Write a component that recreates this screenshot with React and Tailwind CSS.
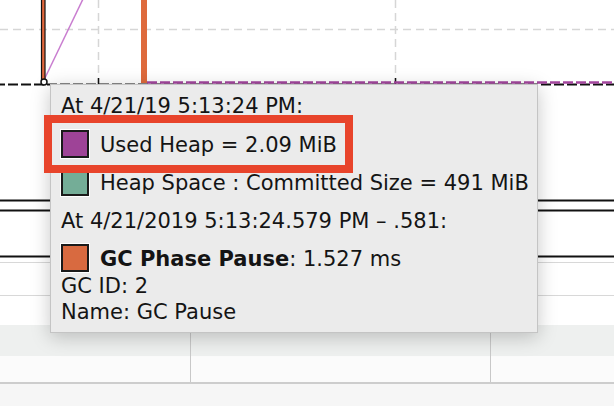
import React from 'react'

const font = { fontFamily: '"DejaVu Sans", "Liberation Sans", sans-serif' }

function Chart() {
  return (
    <svg width="614" height="325" className="block">
      {/* grid */}
      <line x1="0" y1="29.5" x2="614" y2="29.5" stroke="#d6d6d6" strokeWidth="1.5" strokeDasharray="8 5" />
      <line x1="98.5" y1="0" x2="98.5" y2="83" stroke="#d6d6d6" strokeWidth="1.5" strokeDasharray="8 5" />
      <line x1="395.5" y1="0" x2="395.5" y2="83" stroke="#d6d6d6" strokeWidth="1.5" strokeDasharray="8 5" />
      <line x1="98.5" y1="78" x2="98.5" y2="84" stroke="#111" strokeWidth="1.5" />
      <line x1="395.5" y1="78" x2="395.5" y2="84" stroke="#111" strokeWidth="1.5" />

      {/* series */}
      <line x1="0" y1="84.5" x2="614" y2="84.5" stroke="#111" strokeWidth="2" strokeDasharray="10 3" strokeDashoffset="5" />
      <line x1="147" y1="82.5" x2="614" y2="82.5" stroke="#a4479f" strokeWidth="2.5" strokeDasharray="10 3" />
      <line x1="44" y1="80" x2="83" y2="-1" stroke="#c97dd0" strokeWidth="1.5" />
      <rect x="41.5" y="-2" width="3.5" height="82" fill="#e0673c" stroke="#111" strokeWidth="1.2" />
      <circle cx="44" cy="82" r="3" fill="#fff" stroke="#111" strokeWidth="1.5" />
      <rect x="141" y="-1" width="6" height="84" fill="#de6a3c" />

      {/* lower lanes */}
      <line x1="0" y1="200.5" x2="614" y2="200.5" stroke="#111" strokeWidth="2" />
      <line x1="0" y1="210.5" x2="614" y2="210.5" stroke="#111" strokeWidth="2" />
      <line x1="0" y1="256.5" x2="614" y2="256.5" stroke="#111" strokeWidth="2" />
      <line x1="0" y1="262.5" x2="614" y2="262.5" stroke="#d8d8d8" strokeWidth="1" />
      <line x1="0" y1="295.5" x2="614" y2="295.5" stroke="#d8d8d8" strokeWidth="1" />
    </svg>
  )
}

function Swatch({ color }) {
  return <div className="w-[28px] h-[28px] shrink-0 border-2 border-[#1a1a1a] ring-1 ring-white" style={{ background: color }} />
}

function Tooltip() {
  return (
    <div
      className="absolute left-[50px] top-[84px] w-[488px] h-[249px] bg-[#ebebeb] border border-[#c4c4c4] shadow-[0_4px_18px_rgba(0,0,0,0.22)] pt-[8px] pl-[10px] text-[21px] leading-[26px] text-[#141414] whitespace-nowrap"
      style={font}
    >
      <div>At 4/21/19 5:13:24 PM:</div>
      <div className="flex items-start gap-[11px] mt-[11px] h-[28px]">
        <Swatch color="#9e4397" />
        <div className="mt-[2px]">Used Heap = 2.09 MiB</div>
      </div>
      <div className="flex items-start gap-[11px] mt-[10px] h-[28px]">
        <Swatch color="#74ad97" />
        <div className="mt-[2px]">Heap Space : Committed Size = 491 MiB</div>
      </div>
      <div className="mt-[12px]">At 4/21/2019 5:13:24.579 PM – .581:</div>
      <div className="flex items-start gap-[11px] mt-[10px] h-[28px]">
        <Swatch color="#d86a40" />
        <div className="mt-[2px]"><span className="font-bold">GC Phase Pause</span>: 1.527 ms</div>
      </div>
      <div className="mt-[1px]">GC ID: 2</div>
      <div>Name: GC Pause</div>
    </div>
  )
}

export default function App() {
  return (
    <div className="relative w-[614px] h-[406px] overflow-hidden bg-white">
      <Chart />
      <div className="grid grid-cols-[191px_300px_1fr]">
        <div className="h-[31px] bg-[#eef0ef] border-r-[1.5px] border-[#c8c8c8]" />
        <div className="h-[31px] bg-[#eef0ef] border-r-[1.5px] border-[#c8c8c8]" />
        <div className="h-[31px] bg-[#eef0ef]" />
        <div className="h-[26px] bg-[#fbfbfb] border-r-[1.5px] border-[#c8c8c8]" />
        <div className="h-[26px] bg-[#fbfbfb] border-r-[1.5px] border-[#c8c8c8]" />
        <div className="h-[26px] bg-[#fbfbfb]" />
      </div>
      <div className="h-[24px] bg-[#f6f6f6] border-t-2 border-[#cdcdcd]" />
      <Tooltip />
      <div className="absolute left-[44px] top-[115px] w-[309px] h-[58px] border-[8px] border-[#e8442b]" />
    </div>
  )
}
